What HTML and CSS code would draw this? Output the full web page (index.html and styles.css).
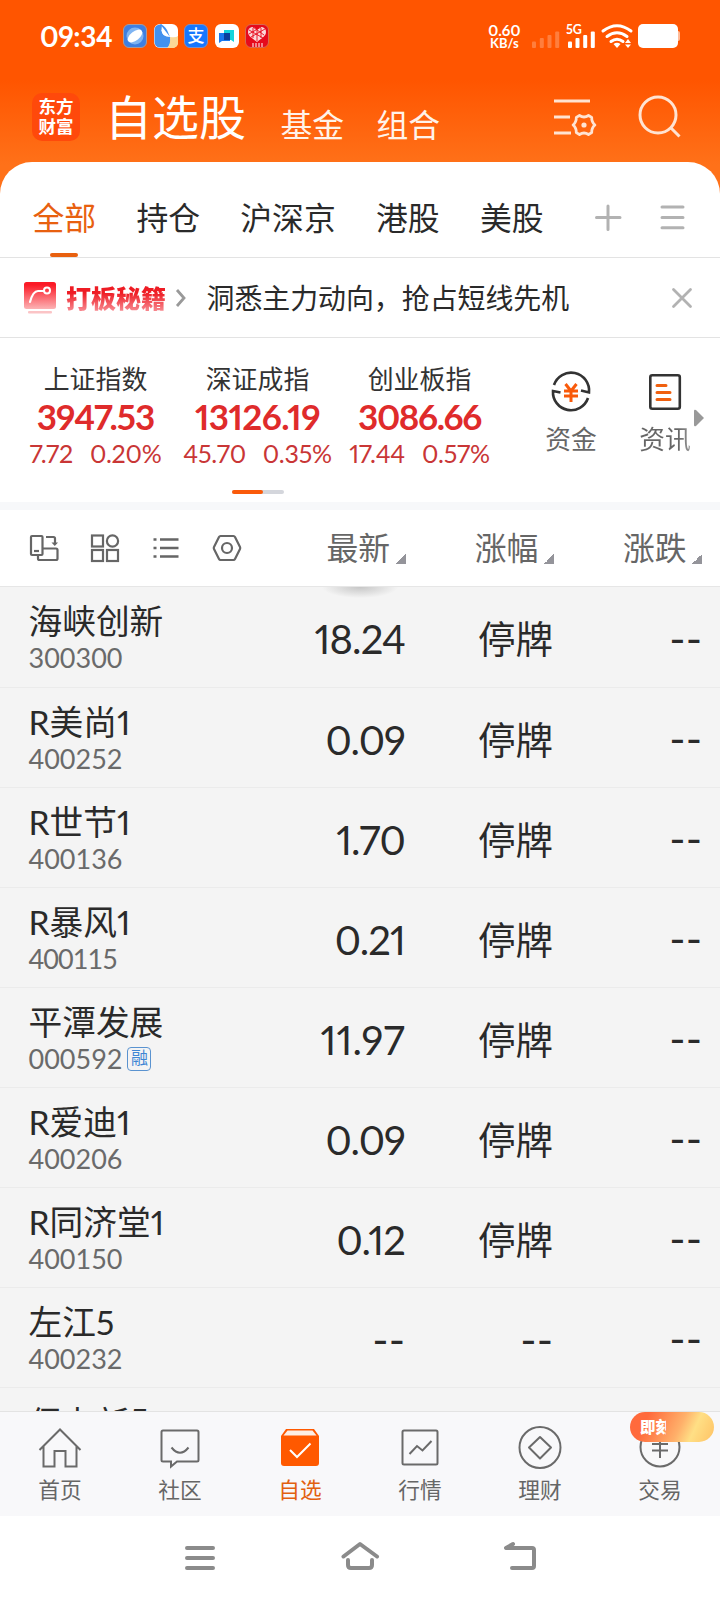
FILE: index.html
```html
<!DOCTYPE html>
<html lang="zh-CN">
<head>
<meta charset="utf-8">
<title>自选股</title>
<link rel="stylesheet" href="styles.css">
</head>
<body>
<div class="screen">
  <header class="top">
    <div class="status">
      <span class="clock">09:34</span>
      <div class="apps">
        <svg viewBox="0 0 24 24"><rect x=".5" y=".5" width="23" height="23" rx="5.5" fill="#3f7fe0" stroke="#a89a9c"/><circle cx="12" cy="12" r="8.5" fill="#7fb4f2"/><ellipse cx="12" cy="12" rx="8.5" ry="4.600" transform="rotate(-38 12 12)" fill="#fff"/></svg>
        <svg viewBox="0 0 24 24"><rect width="24" height="24" rx="6" fill="#fff"/><path d="M8 .5H6a5.500 5.500 0 0 0-5.500 5.500v12a5.500 5.500 0 0 0 5.500 5.500h8q4-5 2-10.500Q8 13 7.500 6z" fill="#4291ee"/><path d="M6 0q4 1 7 6l3 7" fill="#4291ee"/><path d="M16 13q6 1 8-1v7a5 5 0 0 1-5 5h-6q4-4 3-11z" fill="#fbd896"/><path d="M8 6q1 6 6 5" stroke="#fff" stroke-width="1.300" fill="none"/></svg>
        <svg viewBox="0 0 24 24"><rect x=".5" y=".5" width="23" height="23" rx="5.5" fill="#1677ff" stroke="#7d8fc4"/><text x="12" y="18" font-size="17" font-weight="500" text-anchor="middle" fill="#fff">支</text></svg>
        <svg viewBox="0 0 24 24"><rect width="24" height="24" rx="6" fill="#fff"/><path d="M9 6h10v12l-3-2H9z" fill="#12d3dc"/><path d="M4 9h11v8H7l-3 2z" fill="#1878ee"/><path d="M9 9h6v7H9z" fill="#0a3f9c"/></svg>
        <svg viewBox="0 0 24 24"><rect x=".5" y=".5" width="23" height="23" rx="5.5" fill="#e60a1c" stroke="#d86a50"/><path d="M12 18C7 14 3 12 3 8q0-4 4-5q3 0 5 3q2-3 5-3q4 1 4 5c0 4-4 6-9 10z" fill="#fbd9d9"/><path d="M4 6l14 8M8 3l11 8M20 5L6 13M16 3L4 10M12 6v11M8 4v10M16 4v10" stroke="#e60a1c" stroke-width=".9"/><path d="M8 19v4M11 19v4M14 19v4M17 19v4" stroke="#fff"/></svg>
      </div>
      <div class="speed"><b>0.60</b><b class="unit">KB/s</b></div>
      <svg class="radio" viewBox="530 22 152 28" fill="#fff">
        <g opacity=".24"><rect x="532" y="41.5" width="4" height="6.5" rx="1"/><rect x="539.8" y="38" width="4" height="10" rx="1"/><rect x="547.5" y="35" width="4" height="13" rx="1"/><rect x="555.2" y="31.500" width="4" height="16.500" rx="1"/></g>
        <rect x="568" y="41.500" width="4" height="6.500" rx="1"/><rect x="575.500" y="38" width="4" height="10" rx="1"/><rect x="583.200" y="35" width="4" height="13" rx="1"/><rect x="590.800" y="31.500" width="4" height="16.500" rx="1"/>
        <text x="566" y="34" font-size="12.500" font-weight="700">5G</text>
        <g fill="none" stroke="#fff" stroke-width="3"><path d="M603 31q14-10.500 28 0M607 36.500q10-7.500 20 0M611 41.500q6-4.500 12 0" stroke-linecap="round"/></g>
        <path d="M613.500 44q3.500-2.500 7 0L617 48zM625 43l3-4 3 4zM625 44.500l3 3.500 3-3.500z"/>
        <rect x="638" y="24" width="40" height="24" rx="5"/><path d="M678 31q2 0 2 2v6q0 2-2 2z" opacity=".6"/>
      </svg>
    </div>
    <div class="titlebar">
      <div class="logo"><span>东方</span><span>财富</span></div>
      <h1>自选股</h1>
      <span class="sub fund">基金</span>
      <span class="sub combo">组合</span>
      <svg class="headicons" viewBox="550 90 136 52" fill="none" stroke="#ffe3d2" stroke-width="3">
        <path d="M554 101h36M554 117h16M554 133h17"/>
        <path d="M579.500 115.500q4.500 3 9 0l3.200 1.900q-.2 4.600 3.200 7.600q-3.400 3-3.200 7.600l-3.200 1.900q-4.500-3-9 0l-3.200-1.900q.2-4.600-3.200-7.600q3.400-3 3.200-7.600z" stroke-linejoin="round" stroke-width="2.800"/>
        <circle cx="584" cy="125" r="2.600" fill="#ffe3d2" stroke="none"/>
        <circle cx="658" cy="115" r="18"/><path d="M671 128l8.500 8.500"/>
      </svg>
    </div>
  </header>

  <main class="card">
    <nav class="tabs">
      <span class="tab on">全部</span><span class="tab">持仓</span><span class="tab">沪深京</span><span class="tab">港股</span><span class="tab">美股</span>
      <svg class="tabicons" viewBox="590 200 100 34" fill="none" stroke="#b2b2b2" stroke-width="3" stroke-linecap="round"><path d="M596.500 217.500h23.500M608 206v23.500M662 207h21M662 217.500h21M662 227.700h21"/></svg>
    </nav>

    <section class="promo">
      <svg class="promoicon" viewBox="0 0 32 34">
        <defs><linearGradient id="red" x1="0" y1="0" x2="0" y2="1"><stop offset=".1" stop-color="#fb1a26"/><stop offset="1" stop-color="#fcb3b5"/></linearGradient></defs>
        <rect y="1" width="32" height="27" rx="2.500" fill="url(#red)"/>
        <path d="M6 21Q9 10 14 10h6" fill="none" stroke="#fff" stroke-width="2.200" stroke-linecap="round"/><circle cx="23" cy="9.500" r="3" fill="none" stroke="#fff" stroke-width="2"/>
        <rect x="4" y="30" width="24" height="2.600" rx="1" fill="#fbc4c6"/>
      </svg>
      <b class="secret">打板秘籍</b>
      <svg class="chev" viewBox="0 0 12 20"><path d="M2 2l7 8-7 8" fill="none" stroke="#999" stroke-width="2.800"/></svg>
      <span class="slogan">洞悉主力动向，抢占短线先机</span>
      <svg class="close" viewBox="0 0 20 20"><path d="M1.500 1.500l17 17M18.500 1.500l-17 17" stroke="#b2b2b2" stroke-width="2.800" stroke-linecap="round"/></svg>
    </section>

    <section class="market">
      <div class="indices">
        <div class="index"><span class="iname">上证指数</span><b class="ival v1">3947.53</b><span class="ichg"><span>7.72</span><span>0.20%</span></span></div>
        <div class="index"><span class="iname">深证成指</span><b class="ival v2">13126.19</b><span class="ichg"><span>45.70</span><span>0.35%</span></span></div>
        <div class="index"><span class="iname">创业板指</span><b class="ival v3">3086.66</b><span class="ichg"><span>17.44</span><span>0.57%</span></span></div>
      </div>
      <div class="quick">
        <svg viewBox="0 0 40 40" fill="none" stroke="#333" stroke-width="2.600"><path d="M3 13A18 18 0 0 1 38 20.500L30 18.500M37 26A18 18 0 0 1 2 19L9.500 20.500"/><path d="M14.500 12l5.500 7 5.500-7M13 19h14M13 24h14M20 19v11" stroke="#f95a0a" stroke-width="3"/></svg>
        <span>资金</span>
      </div>
      <div class="quick">
        <svg viewBox="0 0 40 40" fill="none" stroke="#333" stroke-width="2.600"><rect x="5.300" y="3.300" width="29.500" height="33.500" rx="2"/><path d="M12 13.500h9M12 20.500h13M12 27.500h13" stroke="#f0600f" stroke-width="3" stroke-linecap="round"/></svg>
        <span class="news">资讯</span>
      </div>
      <svg class="more" viewBox="0 0 10 18"><path d="M0 2Q0 0 2 1l8 8-8 8q-2 1-2-1z" fill="#999"/></svg>
      <div class="pager"><i></i></div>
    </section>

    <section class="thead">
      <svg class="tools" viewBox="28 530 216 34" fill="none" stroke="#666" stroke-width="2.200">
        <rect x="31" y="536" width="11.500" height="19" rx="1"/><path d="M34 551h5"/><path d="M42.500 548.500H56q1.500 0 1.500 1.500v8.500q0 1.500-1.500 1.500H39.500q-1.500 0-1.500-1.500V555M46 537h7.500q1.500 0 1.500 1.500V544"/><path d="M51.500 542.500h6.500l-3.250 3.500z" fill="#666" stroke="none"/>
        <rect x="92" y="535.500" width="11" height="11"/><circle cx="112.500" cy="541" r="5.600"/><rect x="92" y="550" width="11" height="11"/><rect x="107" y="550" width="11" height="11"/>
        <path d="M160 539.500h18.500M160 548h18.500M160 556.500h18.500M153.500 539.500h3M153.500 548h3M153.500 556.500h3" stroke-width="2.700"/>
        <path d="M220.500 536h13q1 0 1.500 1l5 10q.5 1 0 2l-5 10q-.5 1-1.500 1h-13q-1 0-1.500-1l-5-10q-.5-1 0-2l5-10q.5-1 1.500-1z"/><circle cx="227" cy="548" r="5"/>
      </svg>
      <span class="col c1">最新<i></i></span><span class="col">涨幅<i></i></span><span class="col">涨跌<i></i></span>
    </section>

    <section class="list">
      <div class="row"><div class="stock"><span class="name">海峡创新</span><span class="code">300300</span></div><span class="price">18.24</span><span class="state">停牌</span><span class="diff dash">--</span></div>
      <div class="row"><div class="stock"><span class="name">R美尚1</span><span class="code">400252</span></div><span class="price">0.09</span><span class="state">停牌</span><span class="diff dash">--</span></div>
      <div class="row"><div class="stock"><span class="name">R世节1</span><span class="code">400136</span></div><span class="price">1.70</span><span class="state">停牌</span><span class="diff dash">--</span></div>
      <div class="row"><div class="stock"><span class="name">R暴风1</span><span class="code narrow">400115</span></div><span class="price">0.21</span><span class="state">停牌</span><span class="diff dash">--</span></div>
      <div class="row"><div class="stock"><span class="name">平潭发展</span><span class="code">000592<em>融</em></span></div><span class="price wide">11.97</span><span class="state">停牌</span><span class="diff dash">--</span></div>
      <div class="row"><div class="stock"><span class="name">R爱迪1</span><span class="code">400206</span></div><span class="price">0.09</span><span class="state">停牌</span><span class="diff dash">--</span></div>
      <div class="row"><div class="stock"><span class="name">R同济堂1</span><span class="code">400150</span></div><span class="price">0.12</span><span class="state">停牌</span><span class="diff dash">--</span></div>
      <div class="row"><div class="stock"><span class="name">左江5</span><span class="code">400232</span></div><span class="price dash">--</span><span class="state dash">--</span><span class="diff dash">--</span></div>
      <div class="row"><div class="stock"><span class="name">保力新<i class="digit">5</i></span></div></div>
    </section>
  </main>

  <nav class="bottom">
    <div class="item"><svg viewBox="0 0 44 44"><path d="M1.500 24L22 3.500 42.500 24M5.500 20.500V40.500H16.500V25H27.500V40.500H38.500V20.500"/></svg><span>首页</span></div>
    <div class="item"><svg viewBox="0 0 44 44"><path d="M5 4.500H39q1.500 0 1.500 1.500V34q0 1.500-1.500 1.500H19L13 40.500V35.500H5q-1.500 0-1.500-1.500V6q0-1.500 1.500-1.500zM13.500 21.500q8.500 10.500 17 0"/></svg><span>社区</span></div>
    <div class="item on"><svg viewBox="0 0 44 44"><path d="M3 10L8 3H36L41 10V37q0 3-3 3H6q-3 0-3-3z" fill="#ff5900" stroke="none"/><path d="M9.500 4.500H34.500L38.500 9.500H5.500z" fill="#fdeee4" stroke="none"/><path d="M12 24l7 7L32.500 17.500" stroke="#fff"/></svg><span>自选</span></div>
    <div class="item"><svg viewBox="0 0 44 44"><rect x="4.500" y="4.500" width="35" height="34" rx="1.500"/><path d="M11.500 28l7.500-8 5.500 4.500L33.500 15"/></svg><span>行情</span></div>
    <div class="item"><svg viewBox="0 0 44 44"><circle cx="22" cy="21.500" r="20.500"/><path d="M22 11L33 21.500 22 32.500 11 21.500z" stroke-linejoin="round"/></svg><span>理财</span></div>
    <div class="item"><svg viewBox="0 0 44 44"><circle cx="22" cy="21" r="19.500"/><path d="M14 18h16M14 24.500h16M22 15v17M16 9l6 7 6-7"/></svg><span>交易</span><b class="badge"><span>即刻</span></b></div>
  </nav>

  <div class="sysnav">
    <svg viewBox="180 1538 360 36" fill="none" stroke="#8b8b8b" stroke-width="4" stroke-linecap="round" stroke-linejoin="round"><path d="M187 1548h26M187 1558h26M187 1568h26M343.500 1556.500L360 1544l17 12.500M348 1560v5q0 3 3 3h18q3 0 3-3v-5M513 1544l-7 4h26q2 0 2 2v16q0 2-2 2h-20"/></svg>
  </div>
</div>
</body>
</html>
```

FILE: styles.css
```css
* { box-sizing: border-box; }
body {
  margin: 0;
  font-family: Lato, "Noto Sans CJK SC", sans-serif;
  font-variant-numeric: proportional-nums;
  font-weight: 400;
  color: #2a2a2a;
}
svg { display: block; flex: none; overflow: visible; }
i, em { font-style: normal; }
.screen { width: 720px; height: 1600px; overflow: hidden; background: #fff; white-space: nowrap; }

/* header */
.top { height: 194px; background: linear-gradient(#ff5500 80px, #ff7119 165px); color: #fff; }
.status { display: flex; align-items: center; height: 72px; padding-left: 40px; }
.clock { width: 83px; font-size: 28px; font-weight: 700; line-height: 32px; letter-spacing: -.4px; }
.apps { display: flex; gap: 6.600px; }
.apps svg { width: 24px; height: 24px; }
.speed { display: flex; flex-direction: column; align-items: center; width: 40px; margin-left: 215px; font-size: 15px; line-height: 14px; }
.unit { font-size: 13px; line-height: 13px; }
.radio { width: 152px; height: 28px; margin-left: 6px; }
.titlebar { display: flex; height: 90px; padding-left: 32px; }
.logo { width: 48px; height: 48px; margin-top: 21px; padding-top: 4px; border-radius: 10px; background: #ff490b; text-align: center; font-size: 17.5px; font-weight: 700; line-height: 20px; }
.logo span { display: block; }
h1 { width: 175.500px; margin: 15px 0 0 25px; font-size: 47px; font-weight: 400; line-height: 60px; }
.sub { width: 96px; margin-top: 33px; font-size: 31.800px; line-height: 40px; color: #fff3ea; }
.combo { width: 173px; }
.headicons { width: 136px; height: 52px; margin-top: 18px; }

/* tabs */
.card { position: relative; height: 1249px; margin-top: -32px; border-radius: 32px 32px 0 0; background: #fff; overflow: hidden; }
.tabs { display: flex; gap: 40.300px; height: 96px; padding-left: 32.500px; border-bottom: 1px solid #e3e3e3; font-size: 31.800px; line-height: 113px; }
.tab { height: 95px; }
.tab.on { position: relative; color: #e8600f; }
.tab.on::after { content: ""; position: absolute; left: 17.500px; bottom: 0; width: 28px; height: 4px; border-radius: 2px; background: #e8600f; }
.tabicons { width: 100px; height: 34px; margin: 38px 0 0 6.500px; }

/* promotion strip */
.promo { display: flex; align-items: center; height: 80px; padding-left: 24px; border-bottom: 1px solid #e3e3e3; }
.promoicon { width: 32px; height: 34px; margin-right: 10px; }
.secret { font-size: 25px; font-weight: 900; line-height: 34px; color: transparent; background: linear-gradient(#ee1c24 35%, #f7838a 85%); background-clip: text; -webkit-background-clip: text; }
.chev { width: 12px; height: 20px; margin: 0 19.500px 0 9px; }
.slogan { width: 464.500px; font-size: 27.900px; line-height: 40px; }
.close { width: 20px; height: 20px; margin-left: 1px; }

/* indices */
.market { position: relative; display: flex; height: 172px; padding-left: 14.500px; border-bottom: 8px solid #f7f8fa; }
.indices { display: flex; width: 502px; color: #df2b2b; }
.index { display: flex; flex-direction: column; align-items: center; width: 162px; padding-top: 24px; }
.iname { font-size: 25.900px; line-height: 34px; color: #333; }
.ival { margin: -1px 0 1px; font-size: 35px; line-height: 42px; }
.v1 { letter-spacing: -1px; }
.v2 { letter-spacing: -.6px; }
.v3 { letter-spacing: -1.400px; }
.ichg { display: flex; gap: 17px; font-size: 25px; line-height: 30px; letter-spacing: -.25px; color: #c93636; }
.quick { display: flex; flex-direction: column; align-items: center; width: 94px; margin-left: 7.500px; padding-top: 34px; font-size: 25.800px; line-height: 34px; color: #666; }
.quick + .quick { margin-left: 0; }
.quick svg { width: 40px; height: 40px; margin-bottom: 10px; }
.news { background: linear-gradient(90deg, #666 75%, #999); background-clip: text; -webkit-background-clip: text; color: transparent; }
.more { position: absolute; left: 694px; top: 71px; width: 10px; height: 18px; }
.pager { position: absolute; left: 232px; top: 152px; width: 52px; height: 4px; border-radius: 2px; background: #d4d6dc; }
.pager i { display: block; width: 31px; height: 4px; border-radius: 2px; background: #fa5a0a; }

/* table header */
.thead { display: flex; align-items: center; height: 77px; padding-left: 28px; border-bottom: 1px solid #e6e6e6; font-size: 31.800px; color: #666; }
.tools { width: 216px; height: 34px; margin: -2px 82.500px 0 0; }
.col { flex: none; width: 148.200px; line-height: 40px; }
.col i { display: inline-block; width: 10px; height: 10px; margin-left: 6px; background: linear-gradient(135deg, transparent 50%, #94949a 50%); vertical-align: -4px; }

/* stock list */
.list { position: relative; height: 824px; overflow: hidden; background: #f4f4f4; }
.list::before { content: ""; position: absolute; left: 322px; top: -11px; width: 76px; height: 22px; background: radial-gradient(closest-side, #c6c6c6, transparent); }
.row { display: flex; align-items: center; height: 100px; padding-left: 28.500px; border-bottom: 1px solid #ebebeb; line-height: 50px; }
.row:first-child { height: 101px; }
.row:first-child .name { padding-top: 1px; line-height: 41px; }
.stock { width: 175.500px; height: 100px; padding-top: 13px; }
.name { display: block; font-size: 33.700px; line-height: 42px; }
.digit { position: relative; top: -2px; font-size: 35px; }
.code { display: flex; align-items: center; gap: 5px; font-size: 27px; line-height: 32px; font-variant-numeric: tabular-nums; color: #6a6a6a; }
.code.narrow { letter-spacing: -.9px; }
.code em { width: 24px; height: 24px; border: 1.500px solid #5a93d0; border-radius: 4px; font-size: 17px; line-height: 20px; text-align: center; color: #3f86d4; }
.price { width: 201px; font-size: 40px; letter-spacing: -.9px; text-align: right; padding-top: 4px; }
.price.wide { letter-spacing: .2px; }
.state { width: 148px; font-size: 37.500px; text-align: right; padding-top: 4px; }
.diff { width: 149px; text-align: right; }
.dash { padding-top: 1px; font-size: 44px; letter-spacing: 0; }
.price.dash, .state.dash { padding-top: 3px; }

/* bottom navigation */
.bottom { display: flex; height: 105px; border-top: 1px solid #e3e3e3; background: #f8f8fa; }
.item { position: relative; display: flex; flex-direction: column; align-items: center; width: 120px; padding-top: 14px; font-size: 21.700px; line-height: 30px; color: #666; }
.item > svg { width: 44px; height: 44px; margin-bottom: 5px; fill: none; stroke: #6a6a6a; stroke-width: 2; }
.item.on { color: #e2600f; }
.badge { position: absolute; left: 30px; top: 0; width: 84px; height: 30px; padding-left: 10px; border-radius: 15px; background: linear-gradient(115deg, #ff6a3c 20%, #ffb06a 58%, #ffdf85 74%, #ffc264); color: #fff; font-size: 15.500px; font-weight: 900; line-height: 30px; }
.badge span { display: block; width: 25.500px; overflow: hidden; }

.sysnav { display: flex; justify-content: center; height: 84px; padding-top: 22px; }
.sysnav svg { width: 360px; height: 36px; }
```
